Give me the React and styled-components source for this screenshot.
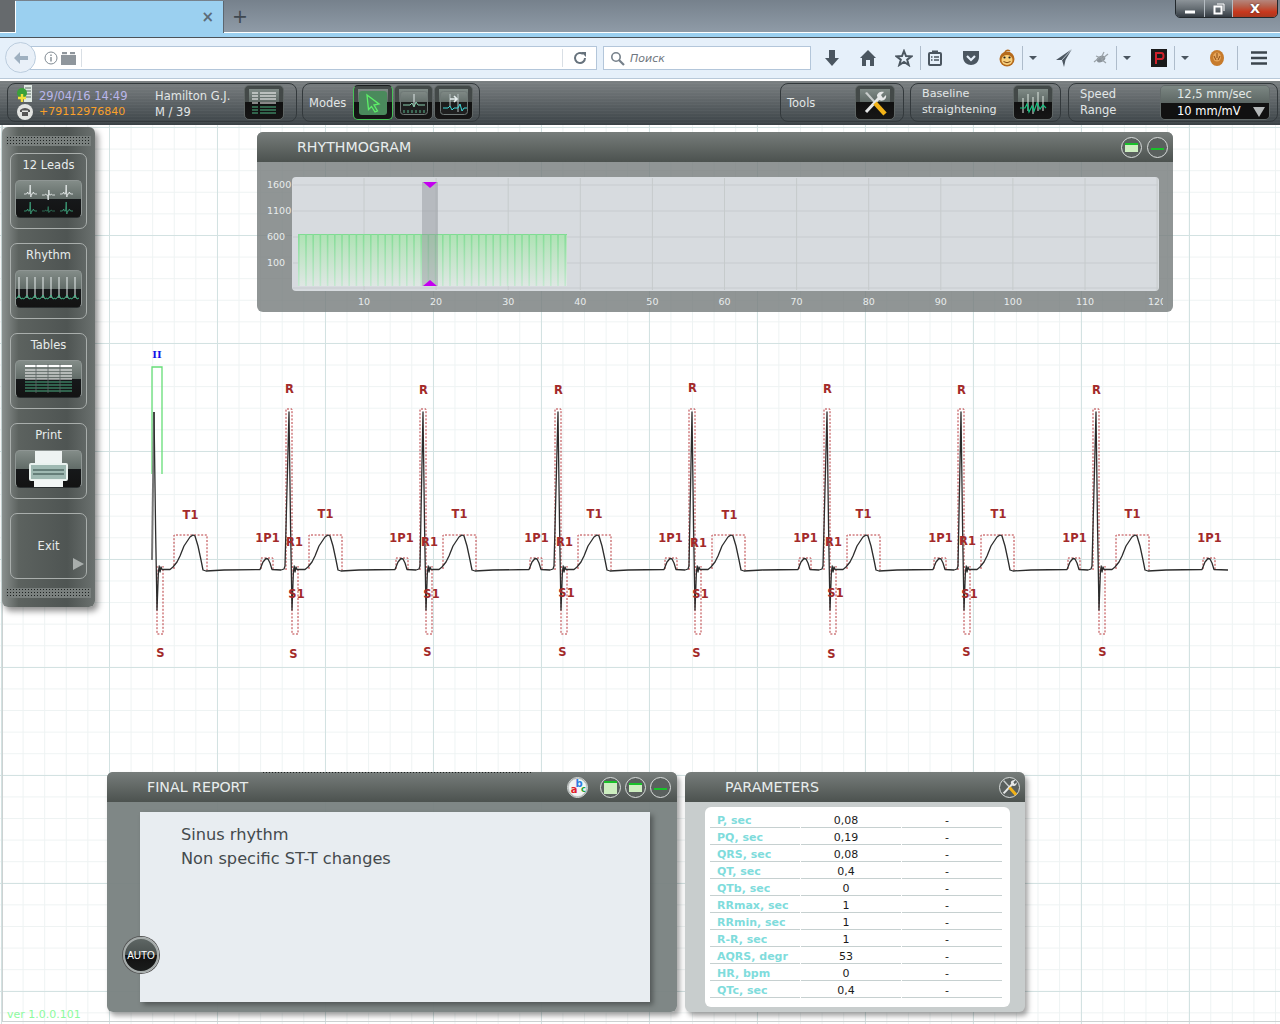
import React from "react";
import styled, { createGlobalStyle } from "styled-components";

const GlobalStyle = createGlobalStyle`
  html, body { margin: 0; padding: 0; background: #fff; }
  body { font-family: "DejaVu Sans", Verdana, sans-serif; overflow: hidden; }
`;

const Page = styled.div`
  width: 1280px;
  height: 1024px;
  display: flex;
  flex-direction: column;
  overflow: hidden;
`;

/* browser chrome */
const TabStrip = styled.div`
  height: 32px;
  display: flex;
  align-items: flex-end;
  position: relative;
  background: linear-gradient(#76818c, #8f9ba7);
  border-bottom: 1px solid #fff;
  padding-left: 15px;
  box-shadow: inset 15px 0 0 #666a6d;
`;
const Tab = styled.div`
  width: 209px;
  height: 32px;
  margin-bottom: -1px;
  box-sizing: border-box;
  background: #9bd0f0;
  border-left: 1px solid #fff;
  border-right: 1px solid #5c6670;
  display: flex;
  align-items: center;
  justify-content: flex-end;
  padding: 0 9px 0 0;
  font-size: 15px;
  font-weight: bold;
  color: #5b6b78;
`;
const NewTab = styled.div`
  margin: 0 0 2px 0;
  width: 32px;
  height: 28px;
  text-align: center;
  font-size: 19px;
  line-height: 28px;
  color: #3f4850;
`;
const WindowButtons = styled.div`
  position: absolute;
  right: 2px;
  top: -1px;
  width: 103px;
  height: 19px;
  display: flex;
  box-sizing: border-box;
  border: 1px solid #22282c;
  border-radius: 0 0 5px 5px;
  overflow: hidden;
`;
const WinButton = styled.div`
  flex: ${(p) => p.$basis};
  display: flex;
  align-items: center;
  justify-content: center;
  color: #fff;
  font-size: 13px;
  font-weight: bold;
  text-shadow: 0 0 2px #333;
  border-right: 1px solid #b5bcc2;
  background: ${(p) =>
    p.$close
      ? "linear-gradient(#b5867d, #b5634f 35%, #c8371c 70%, #a8381f)"
      : "linear-gradient(#8d9499, #666e74 50%, #343b42)"};
  &:last-child {
    border-right: 0;
  }
`;
const Stripe = styled.div`
  height: 4px;
  background: #9bd0f0;
  border-bottom: 1px solid #4b5258;
`;
const NavBar = styled.div`
  height: 40px;
  background: #e6f0fa;
  border-bottom: 1px solid #b9c9d9;
  display: flex;
  align-items: center;
  position: relative;
  padding-left: 25px;
  gap: 6px;
`;
const BackButton = styled.div`
  position: absolute;
  left: 5px;
  top: 4px;
  width: 31px;
  height: 31px;
  border-radius: 50%;
  box-sizing: border-box;
  background: #e9f0f8;
  border: 1px solid #bccdde;
  display: flex;
  align-items: center;
  justify-content: center;
`;
const UrlBox = styled.div`
  width: ${(p) => p.$w}px;
  flex: none;
  height: 24px;
  box-sizing: border-box;
  background: #fff;
  border: 1px solid #b3c6da;
  display: flex;
  align-items: center;
  color: #6f7780;
  font-size: 11px;
  font-style: italic;
`;
const UrlIcons = styled.div`
  width: 56px;
  padding-left: 18px;
  box-sizing: border-box;
  display: flex;
  align-items: center;
  gap: 3px;
  border-right: 1px solid #d9dfe5;
  height: 18px;
`;
const UrlFill = styled.div`
  flex: 1;
`;
const Reload = styled.div`
  width: 33px;
  height: 18px;
  border-left: 1px solid #d9dfe5;
  display: flex;
  align-items: center;
  justify-content: center;
`;
const SearchGlass = styled.svg`
  margin: 0 5px 0 6px;
`;
const NavIcons = styled.div`
  flex: none;
  display: grid;
  grid-template-columns: repeat(463, 1px);
  height: 24px;
`;
const NavIcon = styled.div`
  grid-column: ${(p) => p.$at - 828} / span 24;
  grid-row: 1;
  display: flex;
  align-items: center;
  justify-content: center;
`;
const NavSep = styled.div`
  grid-column: ${(p) => p.$at - 816} / span 1;
  grid-row: 1;
  background: #aebccb;
`;
const WhiteGap = styled.div`
  height: 2px;
  background: #fff;
`;

/* app toolbar */
const Toolbar = styled.div`
  height: 44px;
  box-sizing: border-box;
  padding: 2px 2px 3px 7px;
  display: flex;
  gap: 5px;
  background: repeating-linear-gradient(transparent 0 2px, rgba(255, 255, 255, 0.03) 2px 3px),
    linear-gradient(#7b8082, #5c6265 50%, #3b4246);
`;
const Group = styled.div`
  width: ${(p) => p.$w}px;
  margin-left: ${(p) => p.$push || 0}px;
  box-sizing: border-box;
  border: 1px solid #33393c;
  border-radius: 8px;
  display: flex;
  align-items: center;
  color: #e2e6e6;
  font-size: 11.5px;
  position: relative;
`;
const TwoLines = styled.div`
  width: ${(p) => p.$w}px;
  margin: ${(p) => p.$down || 0}px 0 ${(p) => p.$up || 0}px ${(p) => p.$left || 0}px;
  display: flex;
  flex-direction: column;
  gap: 2px;
  line-height: 14px;
  font-size: ${(p) => p.$size || 11.5}px;
`;
const Date_ = styled.span`
  color: #b9b6ea;
`;
const Phone = styled.span`
  color: #f9a02a;
  font-size: 11px;
`;
const ContactIcons = styled.div`
  margin-left: 9px;
  width: 15px;
  display: flex;
  flex-direction: column;
  align-items: center;
  gap: 1px;
`;
const Label = styled.span`
  margin-left: ${(p) => p.$left}px;
  width: ${(p) => p.$w}px;
`;
const Tile = styled.div`
  width: ${(p) => p.$w || 40}px;
  height: 35px;
  flex: none;
  box-sizing: border-box;
  border: 1px solid ${(p) => (p.$active ? "#47c257" : "#5f6665")};
  border-top-color: ${(p) => (p.$active ? "#1c2020" : "#5f6665")};
  border-radius: 5px;
  background: linear-gradient(#7f8a86, #5e6965) center 3px / calc(100% - 8px) 13px no-repeat,
    linear-gradient(#434948 49%, #101010 50%, #161616);
  display: flex;
  align-items: center;
  justify-content: center;
  overflow: hidden;
`;
const SideTile = styled.div`
  width: 67px;
  height: 38px;
  flex: none;
  box-sizing: border-box;
  border: 1px solid #8f9694;
  border-bottom-color: #2a2f30;
  border-radius: 5px;
  background: linear-gradient(#838c88, #626c68 49%, #16181a 50%, #131313);
  overflow: hidden;
  svg {
    display: block;
    margin: -1px;
  }
`;
const ModeRow = styled.div`
  display: flex;
  gap: 1px;
`;
const Selector = styled.div`
  width: 110px;
  height: 35px;
  margin-left: auto;
  margin-right: 7px;
  border-radius: 5px;
  overflow: hidden;
  border: 1px solid #626a69;
  box-sizing: border-box;
  display: flex;
  flex-direction: column;
`;
const SelectorHalf = styled.div`
  flex: 1;
  display: flex;
  align-items: center;
  padding-left: 16px;
  position: relative;
  background: ${(p) => (p.$dark ? "#111" : "linear-gradient(#7c8783, #5c6663)")};
  color: ${(p) => (p.$dark ? "#fff" : "#e2e8e6")};
  font-size: 11.5px;
`;
const Caret = styled.span`
  position: absolute;
  right: 4px;
  top: 4px;
  border-left: 6px solid transparent;
  border-right: 6px solid transparent;
  border-top: 10px solid #b5b9b9;
`;

/* canvas with the ecg paper */
const Canvas = styled.div`
  flex: 1;
  position: relative;
  background-color: #fff;
  background-image: linear-gradient(#d3e2e2 1px, transparent 1px),
    linear-gradient(90deg, #d3e2e2 1px, transparent 1px),
    linear-gradient(#eef3f3 1px, transparent 1px),
    linear-gradient(90deg, #eef3f3 1px, transparent 1px);
  background-size: 108px 108px, 108px 108px, 21.6px 21.6px, 21.6px 21.6px;
  background-position: 1px 2px;
  &::before {
    content: "";
    position: absolute;
    left: 2px;
    top: 0;
    right: 0;
    bottom: 2px;
    border-left: 1px solid #cdd2d2;
    border-bottom: 1px solid #cdd2d2;
  }
`;
const EcgLayer = styled.svg`
  position: absolute;
  left: 0;
  top: 215px;
`;
const Side = styled.div`
  position: absolute;
  left: 2px;
  top: 2px;
  width: 93px;
  height: 480px;
  box-sizing: border-box;
  padding: 9px 4px;
  border-radius: 6px;
  background: linear-gradient(90deg, #8a908e, #5c625f 18%, #4f5553 70%, #6b716f);
  box-shadow: 3px 4px 6px rgba(0, 0, 0, 0.45);
`;
const Dots = styled.div`
  height: 10px;
  background-color: #7a807e;
  background-image: radial-gradient(#1e2221 0.9px, transparent 1px);
  background-size: 3px 3px;
`;
const SideCards = styled.div`
  padding: 7px 4px 9px;
  display: flex;
  flex-direction: column;
  gap: 14px;
`;
const SideCard = styled.div`
  height: ${(p) => p.$h || 76}px;
  box-sizing: border-box;
  border: 1px solid #a9aeac;
  border-radius: 7px;
  color: #e8ecec;
  font-size: 11.5px;
  display: flex;
  flex-direction: column;
  align-items: center;
  justify-content: ${(p) => (p.$center ? "center" : "flex-start")};
  padding-top: ${(p) => (p.$center ? 0 : 4)}px;
  gap: 8px;
  position: relative;
`;
const ExitArrow = styled.span`
  position: absolute;
  right: 2px;
  bottom: 8px;
  border-top: 6px solid transparent;
  border-bottom: 6px solid transparent;
  border-left: 11px solid #a9aeac;
`;
const Win = styled.div`
  position: absolute;
  left: ${(p) => p.$x}px;
  top: ${(p) => p.$y}px;
  width: ${(p) => p.$w}px;
  height: ${(p) => p.$h}px;
  border-radius: 6px;
  background: ${(p) => p.$bg};
  box-shadow: ${(p) => (p.$flat ? "none" : "3px 4px 5px rgba(0, 0, 0, 0.35)")};
  display: flex;
  flex-direction: column;
`;
const WinHead = styled.div`
  height: 30px;
  flex: none;
  border-radius: 6px 6px 0 0;
  background: linear-gradient(#777d7b, #4c524f);
  color: #e8eded;
  font-size: 14.2px;
  display: flex;
  align-items: center;
  padding: 0 ${(p) => p.$right || 5}px 0 40px;
  gap: 4px;
`;
const WinTitle = styled.span`
  flex: 1;
`;
const RoundBtn = styled.div`
  width: 21px;
  height: 21px;
  box-sizing: border-box;
  border-radius: 50%;
  border: 1px solid #d9dddc;
  background: #5a605e;
  display: flex;
  align-items: center;
  justify-content: center;
  margin-left: ${(p) => p.$gap || 0}px;
`;
const Pane = styled.span`
  display: block;
  width: 13px;
  height: ${(p) => p.$h}px;
  margin-top: ${(p) => (p.$h < 4 ? 4 : 0)}px;
  box-sizing: border-box;
  border-top: 2px solid #19c12a;
  background: #cdeec0;
`;
const TopStrip = styled.div`
  position: absolute;
  left: 155px;
  top: -1px;
  width: 269px;
  height: 4px;
  background-image: radial-gradient(#1e2221 0.8px, transparent 1px);
  background-size: 3px 3px;
`;
const Paper = styled.div`
  margin: 10px 27px 10px 33px;
  flex: 1;
  background: #e8edf1;
  box-shadow: 3px 3px 5px rgba(0, 0, 0, 0.35);
  padding: 11px 41px;
  font-size: 16.2px;
  line-height: 24px;
  color: #444a4d;
`;
const AutoButton = styled.div`
  position: absolute;
  left: 16px;
  top: 165px;
  width: 36px;
  height: 36px;
  box-sizing: border-box;
  border-radius: 50%;
  border: 2px solid #a5abaa;
  box-shadow: 0 0 0 1px #555;
  background: linear-gradient(#5e6664, #4a514f 49%, #111 50%, #1a1c1c);
  color: #fff;
  font-family: "Liberation Sans", sans-serif;
  font-size: 10px;
  display: flex;
  align-items: center;
  justify-content: center;
`;
const ParamCard = styled.div`
  margin: 5px 15px 5px 20px;
  flex: 1;
  background: #fff;
  border-radius: 6px;
  padding: 4px 8px 0 5px;
`;
const ParamRow = styled.div`
  display: grid;
  grid-template-columns: 90px 100px 100px;
  grid-template-rows: 17px;
  column-gap: 1px;
  font-size: 11px;
`;
const Cell = styled.div`
  border-bottom: 1px solid #c6d0d0;
  box-sizing: border-box;
  line-height: 17px;
  text-align: ${(p) => (p.$label ? "left" : "center")};
  color: ${(p) => (p.$label ? "#7fdcdc" : "#1b1b1b")};
  font-weight: ${(p) => (p.$label ? "bold" : "normal")};
  padding: ${(p) => (p.$label ? "1px 0 0 7px" : "1px 10px 0 0")};
`;
const Version = styled.div`
  position: absolute;
  left: 7px;
  bottom: 3px;
  font-size: 11px;
  color: #8dfa9d;
`;

/* little drawings */
const blip = "M0 0H4L6 -2L7 0H9L10 -9L11 3L12 0H14L15 -2L17 0H21";
const dipBlip = "M0 0H4L6 -1L7 0H9L10 5L11 -5L12 0H14L15 -1L17 0H21";

const ListIcon = () => (
  <svg width="30" height="26" viewBox="0 0 30 26">
    {[3, 6, 9, 13, 17, 20, 23].map((y, i) => (
      <g key={y} stroke={i < 4 ? "#fff" : "#4fb583"} strokeWidth="1.1">
        <path d={`M3 ${y}H9M11 ${y}H27`} />
      </g>
    ))}
  </svg>
);
const CursorIcon = () => (
  <svg width="28" height="24" viewBox="0 0 28 24">
    <rect x="0" y="0" width="28" height="24" rx="3" fill="#4a8a5c" />
    <path d="M8 4L20 13L15 14L18.5 20L16 21L12.5 15.5L9.5 18.5Z" fill="none" stroke="#5df068" strokeWidth="1.3" />
  </svg>
);
const ModeIcon = ({ arrows }) => (
  <svg width="28" height="24" viewBox="0 0 28 24">
    <rect x="0.5" y="0.5" width="27" height="23" rx="3" fill="rgba(255,255,255,.05)" stroke="#6f7876" />
    {arrows ? (
      <>
        <path d="M10 3V15M18 3V21" stroke="#b9c4c4" />
        <path d="M10 8H16M14 5L17 8L14 11" stroke="#e6eeee" strokeWidth="1.6" fill="none" />
        <path d="M3 17H8L10 15L12 19L14 17H18L20 13L22 20L24 17H27" stroke="#3fd8d8" fill="none" />
      </>
    ) : (
      <>
        <path d="M14 3V15" stroke="#dfe8e8" />
        <path d="M3 14H10L12 12L14 16L16 11L18 14H25" stroke="#8bd0b0" fill="none" />
        <path d="M4 22V19M8 22V19M12 22V19M16 22V19M20 22V19M24 22V19" stroke="#58b58c" />
      </>
    )}
  </svg>
);
const ToolsIcon = ({ size = 26 }) => (
  <svg width={size} height={size} viewBox="0 0 26 26">
    <path d="M3 3L5 2L14 12L12.5 13.5Z" fill="#c9cdcc" />
    <path d="M4 22L17 8" stroke="#e6e8e8" strokeWidth="3" />
    <path d="M15 6C15 2 20 1 22 2L19 5L21 8L24 5C25 9 21 12 17 10Z" fill="#e6e8e8" />
    <path d="M13 13L23 24" stroke="#f2b318" strokeWidth="4.5" />
  </svg>
);
const BaselineIcon = () => (
  <svg width="30" height="28" viewBox="0 0 30 28">
    <path d="M5 9V24M10 5V22M15 8V25M20 3V22M25 7V22" stroke="#dfe8e2" />
    <path d="M2 19H7L9 15L11 23L14 17L16 22L19 14L22 20L25 16L28 19" stroke="#16c080" strokeWidth="1.2" fill="none" />
  </svg>
);
const LeadsTile = () => (
  <svg width="67" height="38" viewBox="0 0 67 38">
    <g fill="none" strokeWidth="1">
      <path transform="translate(9 14) scale(.62 1)" d={blip} stroke="#eef3f3" />
      <path transform="translate(27 15) scale(.62 1)" d={dipBlip} stroke="#eef3f3" />
      <path transform="translate(45 14) scale(.62 1)" d={blip} stroke="#eef3f3" />
      <path transform="translate(9 31) scale(.62 1)" d={blip} stroke="#3fa77f" />
      <path transform="translate(27 31) scale(.62 .5)" d={blip} stroke="#3fa77f" />
      <path transform="translate(45 31) scale(.62 1)" d={blip} stroke="#3fa77f" />
    </g>
  </svg>
);
const RhythmTile = () => (
  <svg width="67" height="38" viewBox="0 0 67 38">
    {[4, 12, 20, 28, 36, 44, 52, 60].map((x) => (
      <g key={x}>
        <path d={`M${x} 7V28`} stroke="#e8eeee" />
        <path d={`M${x - 4} 29L${x - 2} 28L${x} 25L${x + 2} 29L${x + 4} 28`} stroke="#46b98b" fill="none" />
      </g>
    ))}
  </svg>
);
const TablesTile = () => (
  <svg width="67" height="38" viewBox="0 0 67 38">
    {[6, 10, 13, 16, 19].map((y, i) => (
      <path key={y} d={`M10 ${y}H57`} stroke="#fff" strokeWidth={i === 0 ? 2 : 1} />
    ))}
    {[22, 25, 28, 31].map((y) => (
      <path key={y} d={`M10 ${y}H57`} stroke="#4cae83" />
    ))}
    <path d="M21 4V33M33 4V33M45 4V33" stroke="#5e6664" strokeWidth="0.8" />
  </svg>
);
const PrintTile = () => (
  <svg width="67" height="38" viewBox="0 0 67 38">
    <rect x="20" y="0" width="27" height="16" fill="#eef3f2" />
    <rect x="15" y="14" width="37" height="16" rx="1" fill="#9fb9b2" stroke="#eaf2ef" strokeWidth="2" />
    <path d="M18 20H49M18 24H49" stroke="#2d4540" />
    <rect x="19" y="30" width="29" height="7" fill="#f2f6f5" />
  </svg>
);
const AbcIcon = () => (
  <svg width="21" height="21" viewBox="0 0 21 21">
    <circle cx="10.5" cy="10.5" r="10" fill="#f1f4f4" stroke="#cfd4d3" />
    <text x="3" y="17" fontSize="11" fontWeight="bold" fontFamily="DejaVu Sans" letterSpacing="-2">
      <tspan fill="#e0202a">a</tspan>
      <tspan fill="#2b7de0" dy="-7">b</tspan>
      <tspan fill="#18a030" dy="6" fontSize="9">c</tspan>
    </text>
  </svg>
);

const gray = "#4b5660";
const Drop = () => (
  <svg width="8" height="5" viewBox="0 0 8 5"><path d="M0 0H8L4 4Z" fill={gray} /></svg>
);
const BrowserIcons = () => (
  <NavIcons>
    <NavIcon $at={832}>
      <svg width="16" height="18" viewBox="0 0 16 18"><path d="M5 1H11V9H15L8 17L1 9H5Z" fill={gray} /></svg>
    </NavIcon>
    <NavIcon $at={868}>
      <svg width="18" height="18" viewBox="0 0 18 18"><path d="M9 1L17 9H15V17H11V11H7V17H3V9H1Z" fill={gray} /></svg>
    </NavIcon>
    <NavIcon $at={904}>
      <svg width="18" height="18" viewBox="0 0 18 18"><path d="M9 2L11 7L16.5 7.3L12.2 10.7L13.7 16L9 13L4.3 16L5.8 10.7L1.5 7.3L7 7Z" fill="none" stroke={gray} strokeWidth="2" /></svg>
    </NavIcon>
    <NavSep $at={920} />
    <NavIcon $at={935}>
      <svg width="16" height="16" viewBox="0 0 16 16"><rect x="2" y="3" width="12" height="12" rx="1" fill="none" stroke={gray} strokeWidth="2" /><rect x="5" y="0.5" width="6" height="3" fill={gray} /><path d="M4 7H5.5M7 7H12M4 10H5.5M7 10H12" stroke={gray} strokeWidth="1.4" /></svg>
    </NavIcon>
    <NavIcon $at={971}>
      <svg width="18" height="16" viewBox="0 0 18 16"><path d="M1 1H17V7C17 12 13 15 9 15C5 15 1 12 1 7Z" fill={gray} /><path d="M5 6L9 10L13 6" fill="none" stroke="#e6f0fa" strokeWidth="2.2" /></svg>
    </NavIcon>
    <NavIcon $at={1007}>
      <svg width="18" height="18" viewBox="0 0 18 18"><circle cx="9" cy="10" r="7.5" fill="#b56a1c" /><ellipse cx="9" cy="11" rx="5.5" ry="5" fill="#f7cf7c" /><circle cx="6.5" cy="8.5" r="1.1" fill="#222" /><circle cx="11.5" cy="8.5" r="1.1" fill="#222" /><path d="M5.5 12.5Q9 15 12.5 12.5" stroke="#7b4510" fill="none" /><path d="M7 3Q9 0 12 2" stroke="#b56a1c" strokeWidth="1.5" fill="none" /></svg>
    </NavIcon>
    <NavSep $at={1022} />
    <NavIcon $at={1033}><Drop /></NavIcon>
    <NavIcon $at={1064}>
      <svg width="18" height="20" viewBox="0 0 18 20"><path d="M17 1L1 12L7 12L9 19L10.5 12Z" fill={gray} /><path d="M17 1L7 12" stroke="#e6f0fa" strokeWidth="0.7" /></svg>
    </NavIcon>
    <NavIcon $at={1101}>
      <svg width="18" height="16" viewBox="0 0 18 16"><ellipse cx="9" cy="9" rx="4.5" ry="3" fill="#8a9299" transform="rotate(-25 9 9)" /><path d="M2 12L7 8M4 6L9 8M12 2L9 8M16 4L10 9M14 13L9 9" stroke="#9aa2a8" strokeWidth="1.2" /></svg>
    </NavIcon>
    <NavSep $at={1116} />
    <NavIcon $at={1127}><Drop /></NavIcon>
    <NavIcon $at={1159}>
      <svg width="16" height="18" viewBox="0 0 16 18"><rect width="16" height="18" fill="#1a1a1a" /><path d="M5 15V4H10.5Q12.5 4 12.5 7Q12.5 10 10.5 10H5" fill="none" stroke="#d0202a" strokeWidth="2" /></svg>
    </NavIcon>
    <NavSep $at={1174} />
    <NavIcon $at={1185}><Drop /></NavIcon>
    <NavIcon $at={1217}>
      <svg width="16" height="18" viewBox="0 0 16 18"><ellipse cx="8" cy="9" rx="7" ry="8" fill="#c77b2c" /><ellipse cx="8" cy="8" rx="4" ry="4.5" fill="#e6a55a" /><path d="M5 7L7 11M11 7L9 11M8 4V9" stroke="#8a4a14" /></svg>
    </NavIcon>
    <NavSep $at={1237} />
    <NavIcon $at={1259}>
      <svg width="18" height="16" viewBox="0 0 18 16"><path d="M1 2.5H17M1 8H17M1 13.5H17" stroke="#3c454d" strokeWidth="2.6" /></svg>
    </NavIcon>
  </NavIcons>
);

/* ecg data, in page coordinates */
const beats = [154, 289, 423, 558, 692, 827, 961, 1096];
const rLabels = [null, 389, 390, 390, 388, 389, 390, 390];
const sLabels = [[160, 653], [293, 654], [427, 652], [562, 652], [696, 653], [831, 654], [966, 652], [1102, 652]];
const tLabels = [[190, 515], [325, 514], [459, 514], [594, 514], [729, 515], [863, 514], [998, 514], [1132, 514]];
const pLabels = [267, 401, 536, 670, 805, 940, 1074, 1209];
const r1Labels = [[294, 542], [429, 542], [564, 542], [698, 543], [833, 542], [967, 541]];
const s1Labels = [[296, 594], [431, 594], [566, 593], [700, 594], [835, 593], [969, 594]];

const beatShape = [
  [0, 412], [1.6, 530], [3, 610], [4.4, 572], [5.2, 566], [6, 572], [7, 567], [8, 569.5],
  [16, 569.5], [19, 567], [23, 562], [26, 556], [30, 546], [36, 537], [39, 535], [41, 536],
  [44, 546], [47, 560], [49, 570], [52, 571], [70, 570], [106, 569.5], [109, 562], [112, 558.5],
  [114, 559], [116, 563], [118, 569.5], [127, 570], [130, 569], [131, 566],
];

// the last beat stops on the baseline, there is no next R to climb to
const beatPath = (x, i) =>
  beatShape
    .slice(0, i === beats.length - 1 ? -3 : undefined)
    .map(([dx, y]) => `L${x + dx} ${y}`)
    .join(" ");

const redBoxes = (x, i) => (
  <g key={x} fill="none" stroke="#b8383c" strokeDasharray="2 1.6">
    {i > 0 && <path d={`M${x - 3} 570V409H${x + 3}V570`} />}
    <path d={`M${x + 3} 566V634H${x + 9}V566`} />
    <path d={`M${x + 20} 569V535H${x + 53}V570`} />
    <path d={`M${x + 107} 569V558H${x + 119}V569`} />
  </g>
);

const EcgLabel = styled.text`
  font-family: "DejaVu Sans", sans-serif;
  font-size: 11.5px;
  font-weight: 600;
  fill: #a32a2a;
  text-anchor: middle;
  dominant-baseline: central;
`;

const Ecg = () => (
  <EcgLayer width="1280" height="330" viewBox="0 340 1280 330">
    <text x="157" y="358" fontFamily="DejaVu Serif" fontWeight="bold" fontSize="10" fill="#1212e8" textAnchor="middle">II</text>
    <path d="M152 474V367H162V474" fill="none" stroke="#66dd77" strokeWidth="1.3" />
    {beats.map(redBoxes)}
    <path d="M152 560L154 412" stroke="#777" strokeWidth="2" fill="none" />
    <path
      d={`M154 412 ${beats.map(beatPath).join(" ")} L1228 570`}
      fill="none"
      stroke="#2c2c2c"
      strokeWidth="1.3"
      strokeLinejoin="round"
    />
    {beats.map((x, i) => rLabels[i] && <EcgLabel key={x} x={x + 0.5} y={rLabels[i]}>R</EcgLabel>)}
    {sLabels.map(([x, y]) => <EcgLabel key={x} x={x + 0.5} y={y}>S</EcgLabel>)}
    {tLabels.map(([x, y]) => <EcgLabel key={x} x={x + 0.5} y={y}>T1</EcgLabel>)}
    {pLabels.map((x) => <EcgLabel key={x} x={x + 0.5} y={538}>1P1</EcgLabel>)}
    {r1Labels.map(([x, y]) => <EcgLabel key={x} x={x + 0.5} y={y}>R1</EcgLabel>)}
    {s1Labels.map(([x, y]) => <EcgLabel key={x} x={x + 0.5} y={y}>S1</EcgLabel>)}
  </EcgLayer>
);

/* rhythmogram chart, page x minus 257, page y minus 162 */
const ChartSvg = styled.svg`
  display: block;
  font-family: "DejaVu Sans", sans-serif;
  font-size: 9.5px;
`;
const xTicks = [10, 20, 30, 40, 50, 60, 70, 80, 90, 100, 110, 120];
const yTicks = [[1600, 23], [1100, 49], [600, 75], [100, 101]];
const barXs = Array.from({ length: 38 }, (_, i) => 41 + i * 7.2);

const Rhythmogram = () => (
  <ChartSvg width="916" height="150" viewBox="0 0 916 150">
    <defs>
      <linearGradient id="barFill" x1="0" x2="0" y1="0" y2="1">
        <stop offset="0" stopColor="#aee3b4" />
        <stop offset="1" stopColor="#dfe7e4" />
      </linearGradient>
      <linearGradient id="barLine" x1="0" x2="0" y1="0" y2="1">
        <stop offset="0" stopColor="#84dc96" />
        <stop offset="1" stopColor="#c4e8d0" />
      </linearGradient>
      <clipPath id="tickClip"><rect x="0" y="130" width="906" height="20" /></clipPath>
    </defs>
    <rect x="35" y="15" width="867" height="114" rx="4" fill="#d7dbdf" />
    {[23, 49, 75, 101, 126].map((y) => <path key={y} d={`M36 ${y}H901`} stroke="#c8cccf" strokeWidth="1.2" />)}
    {xTicks.map((t, i) => <path key={t} d={`M${107 + i * 72.1} 16V128`} stroke="#c6cbcc" />)}
    <rect x="41" y="72" width="269" height="52" fill="url(#barFill)" />
    <path d="M41 72.5H310" stroke="#7fdc92" />
    {barXs.map((x) => <rect key={x} x={x} y="72" width="1.6" height="52" fill="url(#barLine)" />)}
    <rect x="165" y="20" width="16" height="104" fill="#8d929a" opacity="0.45" />
    <path d="M166 20H180L173 26Z" fill="#c400f0" />
    <path d="M166 124H180L173 118Z" fill="#c400f0" />
    {yTicks.map(([t, y]) => <text key={t} x="10" y={y + 3} fill="#e8ecec">{t}</text>)}
    <g clipPath="url(#tickClip)">
      {xTicks.map((t, i) => <text key={t} x={107 + i * 72.1} y="143" fill="#e8ecec" textAnchor="middle">{t}</text>)}
    </g>
  </ChartSvg>
);

const params = [
  ["P, sec", "0,08"], ["PQ, sec", "0,19"], ["QRS, sec", "0,08"], ["QT, sec", "0,4"],
  ["QTb, sec", "0"], ["RRmax, sec", "1"], ["RRmin, sec", "1"], ["R-R, sec", "1"],
  ["AQRS, degr", "53"], ["HR, bpm", "0"], ["QTc, sec", "0,4"],
];

export default function App() {
  return (
    <Page>
      <GlobalStyle />
      <TabStrip>
        <Tab>×</Tab>
        <NewTab>+</NewTab>
        <WindowButtons>
          <WinButton $basis="0 0 28px">
            <svg width="12" height="12" viewBox="0 0 12 12"><path d="M1 9H11" stroke="#fff" strokeWidth="3" /></svg>
          </WinButton>
          <WinButton $basis="0 0 27px">
            <svg width="12" height="12" viewBox="0 0 12 12"><rect x="1.5" y="3.5" width="7" height="7" fill="none" stroke="#fff" strokeWidth="2" /><path d="M4 1H11V8" fill="none" stroke="#fff" /></svg>
          </WinButton>
          <WinButton $close $basis="1">X</WinButton>
        </WindowButtons>
      </TabStrip>
      <Stripe />
      <NavBar>
        <BackButton>
          <svg width="16" height="14" viewBox="0 0 16 14"><path d="M7 1L1 7L7 13V9H15V5H7Z" fill="#9fb0c0" /></svg>
        </BackButton>
        <UrlBox $w={572}>
          <UrlIcons>
            <svg width="14" height="14" viewBox="0 0 14 14"><circle cx="7" cy="7" r="6" fill="none" stroke="#808a92" /><path d="M7 6V10.5M7 3.5V5" stroke="#808a92" strokeWidth="1.4" /></svg>
            <svg width="15" height="13" viewBox="0 0 15 13"><rect x="0" y="3" width="15" height="10" fill="#8f969c" /><rect x="1" y="0" width="5" height="2.2" fill="#8f969c" /><rect x="9" y="0" width="5" height="2.2" fill="#8f969c" /></svg>
          </UrlIcons>
          <UrlFill />
          <Reload>
            <svg width="14" height="14" viewBox="0 0 14 14"><path d="M12 7A5 5 0 1 1 10 3" fill="none" stroke="#66727c" strokeWidth="2" /><path d="M8 1H13V6Z" fill="#66727c" /></svg>
          </Reload>
        </UrlBox>
        <UrlBox $w={208}>
          <SearchGlass width="15" height="15" viewBox="0 0 15 15"><circle cx="6" cy="6" r="4.2" fill="none" stroke="#76808a" strokeWidth="1.6" /><path d="M9 9L14 14" stroke="#76808a" strokeWidth="2.2" /></SearchGlass>
          Поиск
        </UrlBox>
        <BrowserIcons />
      </NavBar>
      <WhiteGap />
      <Toolbar>
        <Group $w={290}>
          <ContactIcons>
            <svg width="17" height="18" viewBox="0 0 17 18"><rect x="8" y="0" width="8" height="17" fill="#dfe8e2" /><path d="M9 3H15M9 6H15M9 9H15M9 12H15" stroke="#5d6a66" /><circle cx="6" cy="8" r="5" fill="#3aa03a" /><path d="M6 9V17M2 13H10" stroke="#f2e13a" strokeWidth="2.4" /></svg>
            <svg width="16" height="16" viewBox="0 0 16 16"><circle cx="8" cy="8" r="8" fill="#e2e4e2" /><path d="M3 6Q8 2 13 6V8H11V6.5H5V8H3Z" fill="#555" /><rect x="5" y="8" width="6" height="4" fill="#555" /></svg>
          </ContactIcons>
          <TwoLines $w={116} $left={7} $down={2}>
            <Date_>29/04/16 14:49</Date_>
            <Phone>+79112976840</Phone>
          </TwoLines>
          <TwoLines $w={89} $down={2}>
            <span>Hamilton G.J.</span>
            <span>M / 39</span>
          </TwoLines>
          <Tile><ListIcon /></Tile>
        </Group>
        <Group $w={178}>
          <Label $left={6} $w={44}>Modes</Label>
          <ModeRow>
            <Tile $active><CursorIcon /></Tile>
            <Tile $w={39}><ModeIcon /></Tile>
            <Tile $w={39}><ModeIcon arrows /></Tile>
          </ModeRow>
        </Group>
        <Group $w={124} $push={295}>
          <Label $left={6} $w={68}>Tools</Label>
          <Tile><ToolsIcon /></Tile>
        </Group>
        <Group $w={151} $push={1}>
          <TwoLines $w={91} $left={11} $up={2} $size={11.2}>
            <span>Baseline</span>
            <span>straightening</span>
          </TwoLines>
          <Tile><BaselineIcon /></Tile>
        </Group>
        <Group $w={210} $push={2}>
          <TwoLines $w={60} $left={11} $up={2}>
            <span>Speed</span>
            <span>Range</span>
          </TwoLines>
          <Selector>
            <SelectorHalf>12,5 mm/sec</SelectorHalf>
            <SelectorHalf $dark>10 mm/mV<Caret /></SelectorHalf>
          </Selector>
        </Group>
      </Toolbar>
      <Canvas>
        <Ecg />
        <Side>
          <Dots />
          <SideCards>
            <SideCard>12 Leads<SideTile><LeadsTile /></SideTile></SideCard>
            <SideCard>Rhythm<SideTile><RhythmTile /></SideTile></SideCard>
            <SideCard>Tables<SideTile><TablesTile /></SideTile></SideCard>
            <SideCard>Print<SideTile><PrintTile /></SideTile></SideCard>
            <SideCard $h={66} $center>Exit<ExitArrow /></SideCard>
          </SideCards>
          <Dots />
        </Side>
        <Win $x={257} $y={7} $w={916} $h={180} $bg="rgba(120,126,126,0.82)" $flat>
          <WinHead>
            <WinTitle>RHYTHMOGRAM</WinTitle>
            <RoundBtn><Pane $h={9} /></RoundBtn>
            <RoundBtn $gap={1}><Pane $h={2} /></RoundBtn>
          </WinHead>
          <Rhythmogram />
        </Win>
        <Win $x={107} $y={647} $w={570} $h={240} $bg="rgba(120,129,127,0.95)">
          <TopStrip />
          <WinHead $right={6}>
            <WinTitle>FINAL REPORT</WinTitle>
            <RoundBtn><AbcIcon /></RoundBtn>
            <RoundBtn $gap={8}><Pane $h={13} /></RoundBtn>
            <RoundBtn><Pane $h={9} /></RoundBtn>
            <RoundBtn><Pane $h={2} /></RoundBtn>
          </WinHead>
          <Paper>
            Sinus rhythm
            <br />
            Non specific ST-T changes
          </Paper>
          <AutoButton>AUTO</AutoButton>
        </Win>
        <Win $x={685} $y={647} $w={340} $h={240} $bg="#c8cdcd">
          <WinHead>
            <WinTitle>PARAMETERS</WinTitle>
            <RoundBtn><ToolsIcon size={17} /></RoundBtn>
          </WinHead>
          <ParamCard>
            {params.map(([name, value]) => (
              <ParamRow key={name}>
                <Cell $label>{name}</Cell>
                <Cell>{value}</Cell>
                <Cell>-</Cell>
              </ParamRow>
            ))}
          </ParamCard>
        </Win>
        <Version>ver 1.0.0.101</Version>
      </Canvas>
    </Page>
  );
}
